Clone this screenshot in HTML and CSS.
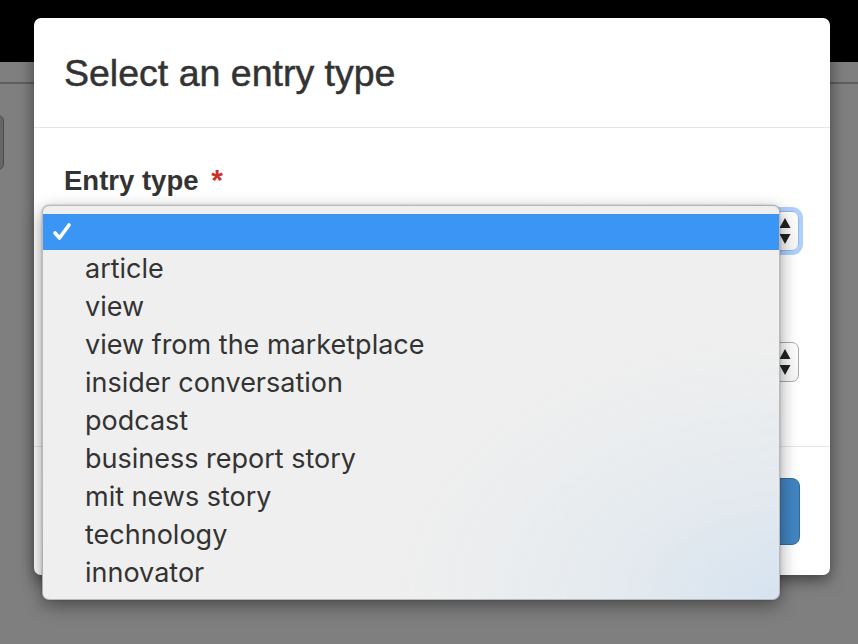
FILE: index.html
```html
<!DOCTYPE html>
<html>
<head>
<meta charset="utf-8">
<link rel="stylesheet" href="styles.css">
</head>
<body>
<div class="page">
  <header class="navbar"></header>
  <div class="subbar"></div>
  <div class="page-body"><button class="side-btn"></button></div>
</div>
<div class="backdrop"></div>
<div class="modal">
  <div class="modal-header"><h4 class="modal-title">Select an entry type</h4></div>
  <div class="modal-body">
    <div class="form-group">
      <label class="control-label">Entry type <span class="req">*</span></label>
      <div class="select select-focus">
        <svg class="arrows" width="12" height="26" viewBox="0 0 12 26"><path d="M6 0 L11.5 10 L0.5 10 Z M0.5 16 L11.5 16 L6 26 Z" fill="#222"/></svg>
      </div>
    </div>
    <div class="form-group form-group-second">
      <div class="select">
        <svg class="arrows" width="12" height="26" viewBox="0 0 12 26"><path d="M6 0 L11.5 10 L0.5 10 Z M0.5 16 L11.5 16 L6 26 Z" fill="#222"/></svg>
      </div>
    </div>
  </div>
  <div class="modal-footer"><button class="btn-primary"></button></div>
</div>
<ul class="dropdown">
  <li class="opt selected"><svg class="check" width="20" height="20" viewBox="0 0 20 20"><path d="M3 11 L7.5 16 L17 3" fill="none" stroke="#fff" stroke-width="3.6" stroke-linecap="round" stroke-linejoin="round"/></svg></li>
  <li class="opt">article</li>
  <li class="opt">view</li>
  <li class="opt">view from the marketplace</li>
  <li class="opt">insider conversation</li>
  <li class="opt">podcast</li>
  <li class="opt">business report story</li>
  <li class="opt">mit news story</li>
  <li class="opt">technology</li>
  <li class="opt">innovator</li>
</ul>
</body>
</html>
```
FILE: styles.css
```css
html, body { margin: 0; padding: 0; }
body {
  width: 858px;
  height: 644px;
  overflow: hidden;
  background: #fff;
  font-family: "Liberation Sans", Arial, sans-serif;
  color: #333;
  position: relative;
}
.page { height: 644px; }
.navbar { height: 62px; background: #000; }
.subbar { height: 20px; border-bottom: 2px solid #bcbcbc; }
.page-body { padding-top: 31px; }
.side-btn {
  display: block;
  margin-left: -30px;
  width: 34px;
  height: 55px;
  border: 1px solid #999;
  border-radius: 6px;
  background: #ccc;
}
.backdrop {
  position: absolute;
  inset: 0;
  background: rgba(0,0,0,0.5);
}
.modal {
  position: absolute;
  left: 34px;
  top: 18px;
  width: 796px;
  height: 557px;
  background: #fff;
  border-radius: 7px;
  box-shadow: 0 5px 15px rgba(0,0,0,0.5);
  display: flex;
  flex-direction: column;
}
.modal-header {
  height: 111px;
  border-bottom: 1px solid #e5e5e5;
  padding: 0 30px;
  display: flex;
  align-items: center;
}
.modal-title {
  margin: 0;
  font-size: 37.5px;
  font-weight: normal;
  color: #333;
  line-height: 40px;
  padding-top: 1px;
  -webkit-text-stroke: 0.5px #333;
}
.modal-body {
  padding: 37px 31px 19px 30px;
  border-bottom: 1px solid #e5e5e5;
}
.form-group { margin-bottom: 45px; }
.form-group-second { padding-top: 46px; }
.control-label {
  display: block;
  font-size: 27.5px;
  line-height: 30px;
  font-weight: bold;
  color: #333;
  margin-bottom: 15px;
}
.req { color: #c9302c; margin-left: 5px; font-size: 30px; }
.select {
  height: 40px;
  box-sizing: border-box;
  border: 1.5px solid #a9a9a9;
  border-radius: 7px;
  background: linear-gradient(#fff, #f6f6f6);
  display: flex;
  align-items: center;
  justify-content: flex-end;
  padding-right: 7px;
}
.select-focus {
  border-color: #8fb7e8;
  box-shadow: 0 0 0 4px rgba(110, 170, 245, 0.55);
}
.modal-footer {
  flex: 1;
  padding: 31px 30px 30px;
  display: flex;
  justify-content: flex-end;
}
.btn-primary {
  width: 200px;
  height: 67px;
  border: 1px solid #2e6da4;
  border-radius: 8px;
  background: linear-gradient(90deg, #3577b3, #4185c0);
}
.dropdown {
  position: absolute;
  left: 42px;
  top: 205px;
  width: 738px;
  height: 395px;
  box-sizing: border-box;
  margin: 0;
  padding: 8px 0 0;
  list-style: none;
  border: 1px solid rgba(0,0,0,0.22);
  border-radius: 7px;
  background:
    radial-gradient(ellipse 380px 260px at 100% 100%, rgba(214,227,240,1) 0%, rgba(222,231,238,0.6) 45%, rgba(239,239,239,0) 100%),
    #efefef;
  box-shadow: 0 6px 18px rgba(0,0,0,0.4), 0 0 2px rgba(0,0,0,0.3);
  overflow: hidden;
}
.opt {
  height: 38px;
  line-height: 38px;
  padding-left: 42px;
  font-family: "Inter", "Liberation Sans", sans-serif;
  font-size: 27px;
  color: #333;
  white-space: nowrap;
}
.opt.selected {
  height: 36px;
  background: #3a95f4;
  position: relative;
}
.check {
  position: absolute;
  left: 9px;
  top: 8px;
}
```
